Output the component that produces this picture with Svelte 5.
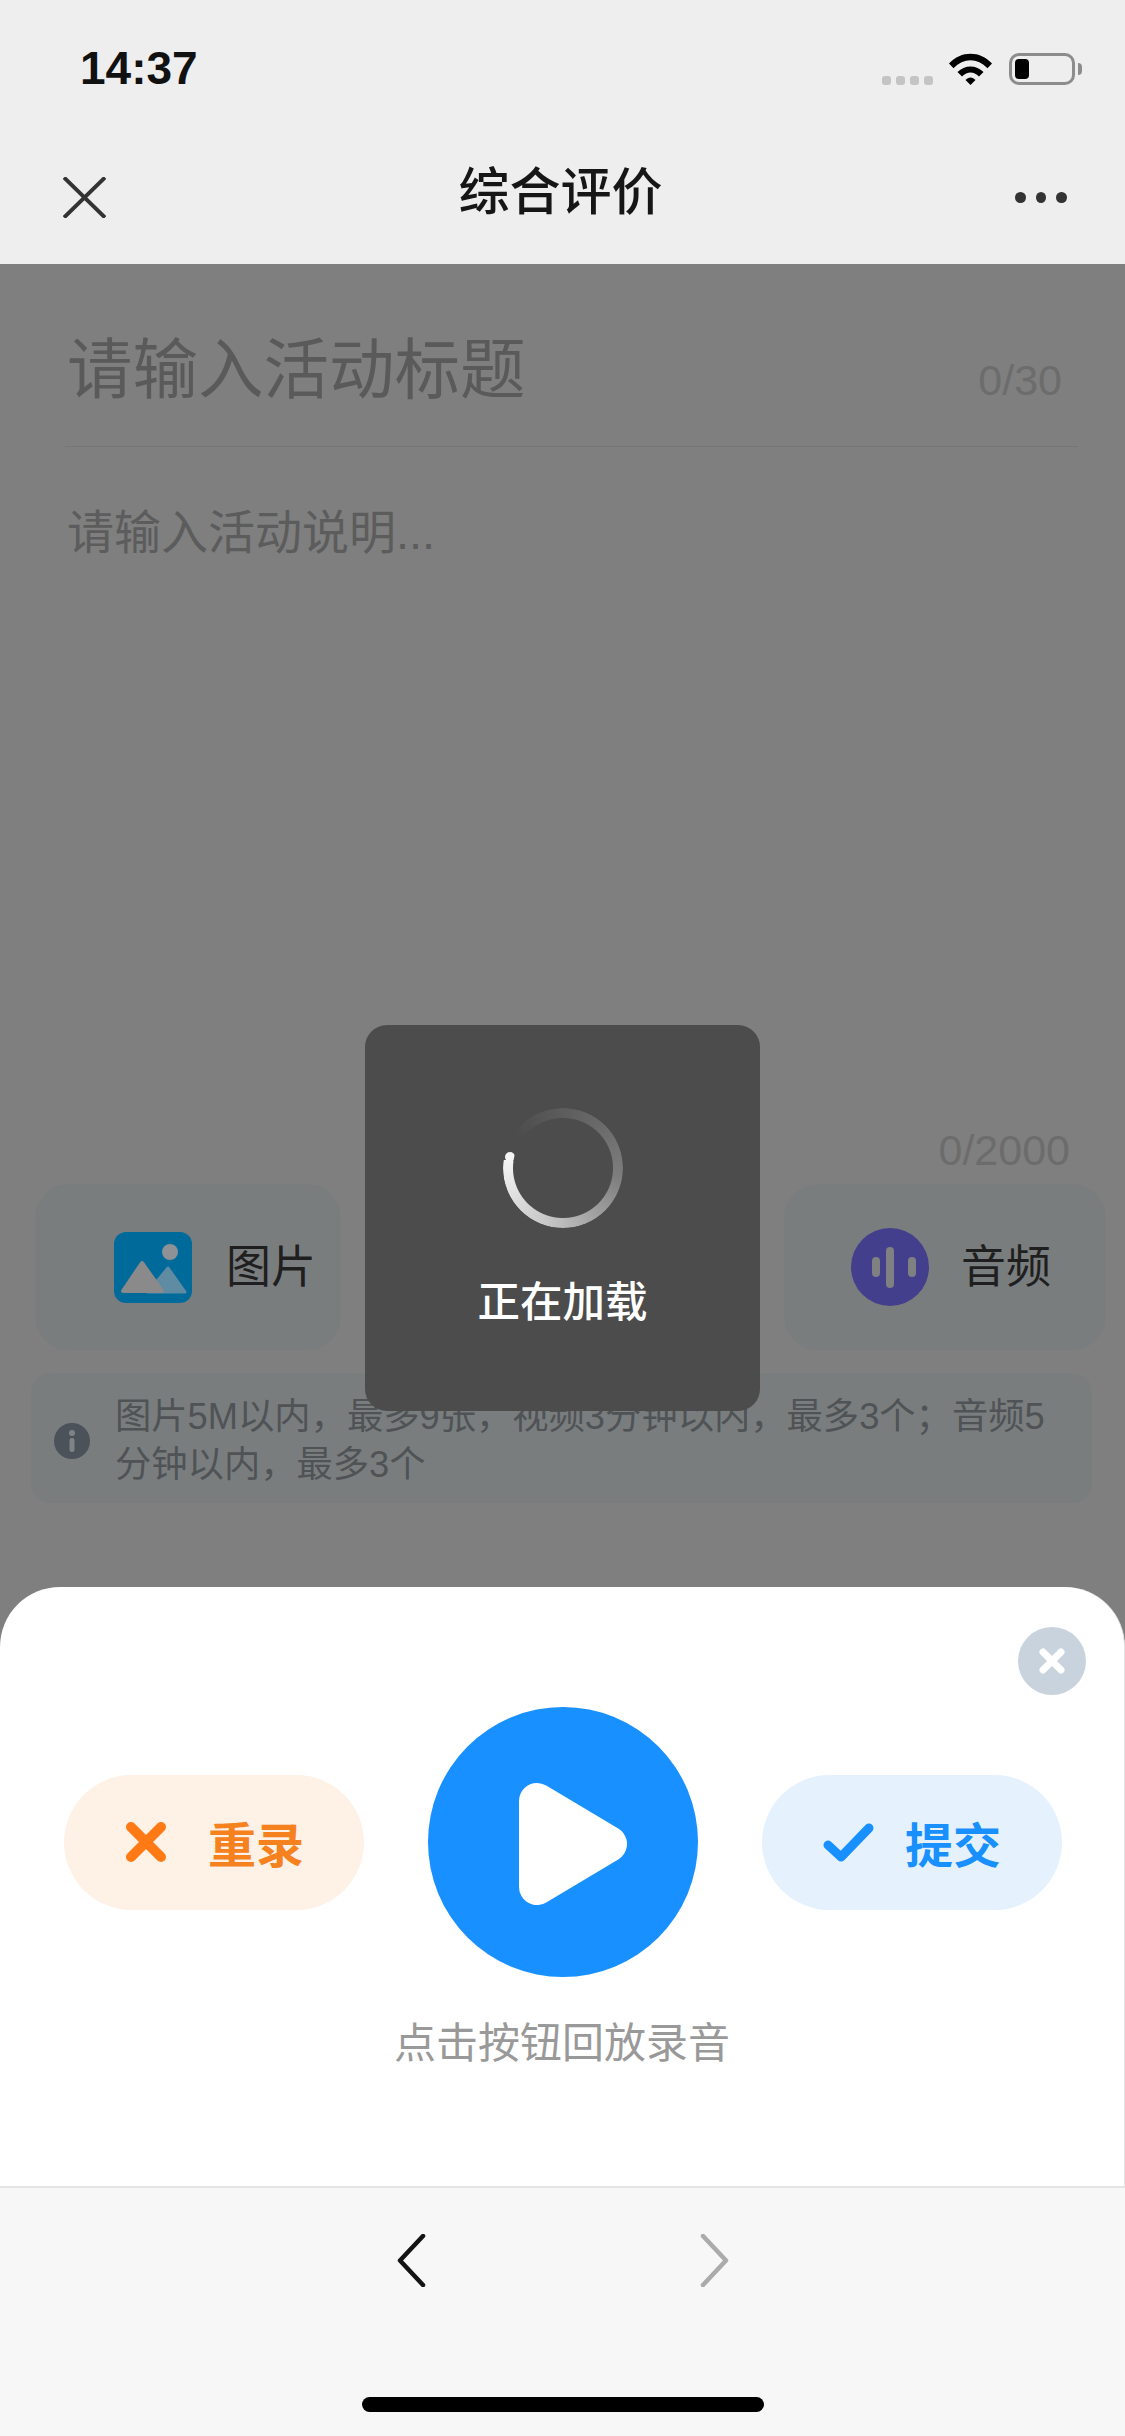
<script lang="ts">
  // Recording sheet over a dimmed activity form, with a loading toast on top
  const dots = [0, 1, 2, 3];
</script>

<div class="page">
  <header class="top">
    <div class="status">
      <span class="time">14:37</span>
      <div class="status-icons">
        <div class="signal">
          {#each dots as d (d)}
            <i></i>
          {/each}
        </div>
        <svg class="wifi" viewBox="0 0 45 33" aria-hidden="true">
          <path d="M1 11.5 C13 -1.5 32 -1.5 44 11.5 L39.5 16.2 C29.5 5.5 15.5 5.5 5.5 16.2 Z" />
          <path d="M9.5 20 C16.5 12.5 28.5 12.5 35.5 20 L31 24.6 C25.5 19 19.5 19 14 24.6 Z" />
          <path d="M17.5 28 C20.5 24.6 24.5 24.6 27.5 28 L22.5 33 Z" />
        </svg>
        <div class="battery"><b></b></div>
      </div>
    </div>
    <nav class="nav">
      <svg class="nav-close" viewBox="0 0 43 41" aria-hidden="true">
        <path d="M1 0.5 L42 40.5 M42 0.5 L1 40.5" />
      </svg>
      <h1>综合评价</h1>
      <div class="more"><i></i><i></i><i></i></div>
    </nav>
  </header>

  <main class="form">
    <div class="title-row">
      <span class="title-ph">请输入活动标题</span>
      <span class="title-count">0/30</span>
    </div>
    <p class="desc-ph">请输入活动说明...</p>
    <div class="desc-count">0/2000</div>

    <div class="cards">
      <div class="card card-image">
        <svg class="pic-icon" viewBox="0 0 78 71" aria-hidden="true">
          <rect width="78" height="71" rx="12" fill="#006a9a" />
          <circle cx="56" cy="20" r="8" fill="#8e9296" />
          <path d="M54 36 L71 60 H34 Z" fill="#5f8ba3" stroke="#5f8ba3" stroke-width="3" stroke-linejoin="round" />
          <path d="M28 31 L48 59 H9 Z" fill="#8a8a8a" stroke="#8a8a8a" stroke-width="4" stroke-linejoin="round" />
        </svg>
        <span>图片</span>
      </div>
      <div class="card card-audio">
        <svg class="audio-icon" viewBox="0 0 78 78" aria-hidden="true">
          <circle cx="39" cy="39" r="39" fill="#433f8c" />
          <rect x="21" y="29" width="8" height="20" rx="4" fill="#7f8082" />
          <rect x="35" y="19" width="8" height="41" rx="4" fill="#7f8082" />
          <rect x="57" y="29" width="8" height="20" rx="4" fill="#7f8082" />
        </svg>
        <span>音频</span>
      </div>
    </div>

    <div class="notice">
      <svg class="info" viewBox="0 0 36 36" aria-hidden="true">
        <circle cx="18" cy="18" r="18" fill="#4c525a" />
        <circle cx="18" cy="10" r="3" fill="#7f8386" />
        <rect x="15.5" y="15" width="5" height="14" rx="2.5" fill="#7f8386" />
      </svg>
      <p>图片5M以内，最多9张，视频3分钟以内，最多3个；音频5分钟以内，最多3个</p>
    </div>
  </main>

  <section class="sheet">
    <button class="sheet-close" aria-label="关闭">
      <svg viewBox="0 0 28 28" aria-hidden="true"><path d="M5 5 L23 23 M23 5 L5 23" /></svg>
    </button>
    <div class="controls">
      <button class="pill pill-redo">
        <svg viewBox="0 0 40 40" aria-hidden="true"><path d="M5 5 L35 35 M35 5 L5 35" /></svg>
        <span>重录</span>
      </button>
      <button class="play" aria-label="播放">
        <svg viewBox="0 0 108 122" aria-hidden="true">
          <path d="M18 18 L90 61 L18 104 Z" />
        </svg>
      </button>
      <button class="pill pill-submit">
        <svg viewBox="0 0 51 39" aria-hidden="true"><path d="M5 22 L18 34 L46 5" /></svg>
        <span>提交</span>
      </button>
    </div>
    <p class="hint">点击按钮回放录音</p>
  </section>

  <footer class="toolbar">
    <div class="arrows">
      <svg class="back" viewBox="0 0 29 53" aria-hidden="true"><path d="M26 2 L3 26.5 L26 51" /></svg>
      <svg class="forward" viewBox="0 0 29 53" aria-hidden="true"><path d="M3 2 L26 26.5 L3 51" /></svg>
    </div>
    <div class="home-bar"></div>
  </footer>

  <div class="toast">
    <div class="spinner"></div>
    <span>正在加载</span>
  </div>
</div>

<style>
  :global(body) {
    margin: 0;
  }

  .page {
    position: relative;
    display: flex;
    flex-direction: column;
    width: 1125px;
    height: 2436px;
    overflow: hidden;
    background: #7f7f7f;
    font-family: "Liberation Sans", "Noto Sans CJK SC", sans-serif;
  }

  p,
  h1 {
    margin: 0;
  }

  button {
    border: 0;
    padding: 0;
    font: inherit;
  }

  .top {
    height: 264px;
    flex: none;
    background: #eeeeee;
  }

  .status {
    display: flex;
    justify-content: space-between;
    align-items: flex-start;
    height: 150px;
    padding: 0 50px 0 80px;
    box-sizing: border-box;
  }

  .time {
    margin-top: 42px;
    font-size: 46px;
    line-height: 53px;
    font-weight: 700;
    color: #111;
  }

  .status-icons {
    display: flex;
    align-items: flex-end;
    margin-top: 52px;
    height: 33px;
  }

  .signal {
    display: flex;
    gap: 5px;
    margin-right: 15px;
  }

  .signal i {
    width: 9px;
    height: 9px;
    border-radius: 3px;
    background: #c4c4c4;
  }

  .wifi {
    width: 45px;
    height: 33px;
    margin-right: 16px;
  }

  .wifi path {
    fill: #000;
  }

  .battery {
    position: relative;
    width: 66px;
    height: 32px;
    box-sizing: border-box;
    padding: 3px;
    border: 3px solid #8c8c8c;
    border-radius: 10px;
  }

  .battery b {
    display: block;
    width: 14px;
    height: 20px;
    border-radius: 4px;
    background: #000;
  }

  .battery::after {
    content: "";
    position: absolute;
    left: 66px;
    top: 7px;
    width: 4px;
    height: 12px;
    border-radius: 0 4px 4px 0;
    background: #8c8c8c;
  }

  .nav {
    display: flex;
    align-items: center;
    justify-content: space-between;
    height: 90px;
    margin-top: 2px;
    padding: 0 58px 0 63px;
  }

  .nav-close {
    width: 43px;
    height: 41px;
  }

  .nav-close path {
    fill: none;
    stroke: #333;
    stroke-width: 4;
  }

  h1 {
    margin-bottom: 8px;
    font-size: 51px;
    line-height: 60px;
    font-weight: 500;
    color: #161616;
  }

  .more {
    display: flex;
    gap: 10px;
    width: 52px;
  }

  .more i {
    width: 11px;
    height: 11px;
    border-radius: 50%;
    background: #333;
  }

  .form {
    flex: 1;
    min-height: 0;
  }

  .title-row {
    display: flex;
    justify-content: space-between;
    align-items: center;
    height: 183px;
    margin: 0 47px 0 65px;
    padding: 32px 16px 0 2px;
    box-sizing: border-box;
    border-bottom: 1px solid #767676;
  }

  .title-ph {
    font-size: 65.5px;
    line-height: 80px;
    color: #5a5a5a;
  }

  .title-count {
    margin-top: 18px;
    font-size: 43px;
    line-height: 50px;
    color: #6c6c6c;
  }

  .desc-ph {
    margin: 60px 0 0 67px;
    font-size: 47px;
    line-height: 52px;
    color: #5c5c5c;
  }

  .desc-count {
    margin-top: 566px;
    padding-right: 55px;
    text-align: right;
    font-size: 43px;
    line-height: 50px;
    color: #6c6c6c;
  }

  .cards {
    display: flex;
    justify-content: space-between;
    margin-top: 9px;
    padding: 0 19px 0 35px;
  }

  .card {
    display: flex;
    align-items: center;
    height: 166px;
    box-sizing: border-box;
    border-radius: 34px;
    background: #7a7d7e;
    font-size: 45px;
    color: #1f1f1f;
  }

  .card span {
    margin-bottom: 8px;
  }

  .card-image {
    width: 306px;
    padding-left: 79px;
    gap: 34px;
  }

  .card-audio {
    width: 322px;
    padding-left: 67px;
    gap: 32px;
  }

  .pic-icon {
    width: 78px;
    height: 71px;
  }

  .audio-icon {
    width: 78px;
    height: 78px;
  }

  .notice {
    display: flex;
    align-items: center;
    gap: 25px;
    height: 130px;
    box-sizing: border-box;
    margin: 23px 33px 0 31px;
    padding: 6px 40px 0 23px;
    border-radius: 20px;
    background: #7a7d7e;
  }

  .info {
    flex: none;
    width: 36px;
    height: 36px;
  }

  .notice p {
    font-size: 36.3px;
    line-height: 48px;
    color: #4f5356;
  }

  .sheet {
    position: relative;
    flex: none;
    height: 599px;
    box-sizing: border-box;
    padding-top: 120px;
    border-right: 1px solid #e5e5e5;
    border-radius: 60px 60px 0 0;
    background: #fff;
  }

  .sheet-close {
    position: absolute;
    top: 40px;
    right: 38px;
    display: grid;
    place-items: center;
    width: 68px;
    height: 68px;
    border-radius: 50%;
    background: #c9d3dd;
  }

  .sheet-close svg {
    width: 28px;
    height: 28px;
  }

  .sheet-close path {
    fill: none;
    stroke: #fff;
    stroke-width: 7;
    stroke-linecap: round;
  }

  .controls {
    display: flex;
    align-items: center;
    gap: 64px;
    padding-left: 64px;
  }

  .pill {
    display: flex;
    align-items: center;
    width: 300px;
    height: 135px;
    border-radius: 68px;
    font-size: 48px;
    font-weight: 700;
  }

  .pill-redo {
    gap: 42px;
    padding-left: 62px;
    background: #fef1e6;
    color: #f5821f;
  }

  .pill-redo svg {
    width: 40px;
    height: 40px;
  }

  .pill-redo path {
    fill: none;
    stroke: #ff7a14;
    stroke-width: 10;
    stroke-linecap: round;
  }

  .pill-submit {
    gap: 31px;
    padding-left: 61px;
    background: #e5f2fe;
    color: #1890ff;
  }

  .pill-submit svg {
    width: 51px;
    height: 39px;
  }

  .pill-submit path {
    fill: none;
    stroke: #1890ff;
    stroke-width: 9;
    stroke-linecap: round;
    stroke-linejoin: round;
  }

  .play {
    display: grid;
    place-items: center;
    flex: none;
    width: 270px;
    height: 270px;
    padding: 4px 0 0 20px;
    box-sizing: border-box;
    border-radius: 50%;
    background: #1890ff;
  }

  .play svg {
    width: 108px;
    height: 122px;
  }

  .play path {
    fill: #fff;
    stroke: #fff;
    stroke-width: 36;
    stroke-linejoin: round;
  }

  .hint {
    margin-top: 42px;
    text-align: center;
    font-size: 42px;
    line-height: 50px;
    color: #999;
  }

  .toolbar {
    flex: none;
    height: 250px;
    box-sizing: border-box;
    border-top: 2px solid #e5e5e5;
    background: #f7f7f7;
  }

  .arrows {
    display: flex;
    justify-content: center;
    gap: 274px;
    padding-top: 46px;
  }

  .arrows svg {
    width: 29px;
    height: 53px;
  }

  .arrows path {
    fill: none;
    stroke-width: 4.5;
    stroke-linecap: round;
    stroke-linejoin: round;
  }

  .back path {
    stroke: #141414;
  }

  .forward path {
    stroke: #ababab;
  }

  .home-bar {
    width: 402px;
    height: 15px;
    margin: 110px auto 0 362px;
    border-radius: 8px;
    background: #000;
  }

  .toast {
    position: absolute;
    left: 365px;
    top: 1025px;
    display: flex;
    flex-direction: column;
    align-items: center;
    width: 395px;
    height: 386px;
    padding-top: 83px;
    box-sizing: border-box;
    border-radius: 22px;
    background: #4c4c4c;
  }

  .spinner {
    position: relative;
    width: 120px;
    height: 120px;
    border-radius: 50%;
    background: conic-gradient(from 278deg, #4c4c4c 0deg, #4c4c4c 28deg, #5c5c5c 80deg, #7d7d7d 180deg, #c8c8c8 280deg, #f4f4f4 360deg);
    -webkit-mask: radial-gradient(circle, transparent 49.5px, #000 50.5px);
    mask: radial-gradient(circle, transparent 49.5px, #000 50.5px);
  }

  .spinner::after {
    content: "";
    position: absolute;
    left: 2px;
    top: 44px;
    width: 10px;
    height: 10px;
    border-radius: 50%;
    background: #f4f4f4;
  }

  .toast span {
    margin-top: 49px;
    font-size: 42.5px;
    line-height: 52px;
    font-weight: 500;
    color: #fff;
  }
</style>
